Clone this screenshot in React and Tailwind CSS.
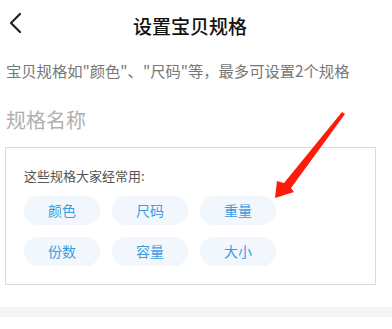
import React from 'react';

const chips = ['颜色', '尺码', '重量', '份数', '容量', '大小'];

const App = () => {
    return (
        <div className="relative w-[392px] h-[329px] bg-white overflow-hidden" style={{ fontFamily: '"Noto Sans CJK SC", "Noto Sans", sans-serif' }}>
            {/* Header */}
            <div className="relative h-[50px] flex items-center justify-center">
                <button className="absolute left-[8px] top-[12px] text-[#222]">
                    <svg width="16" height="24" viewBox="0 0 16 24" fill="none" stroke="currentColor" strokeWidth="2.2" strokeLinecap="round" strokeLinejoin="round">
                        <path d="M12 2 L3 11 L12 20" />
                    </svg>
                </button>
                <h1 className="text-[19px] font-medium text-[#111] mr-[12px] leading-none">设置宝贝规格</h1>
            </div>

            {/* content */}
            <p className="mt-[10px] ml-[6px] text-[15.3px] leading-[20px] text-[#777] whitespace-nowrap">宝贝规格如"颜色"、"尺码"等，最多可设置2个规格</p>
            <div className="mt-[26px] ml-[6px] text-[20px] leading-[28px] text-[#b0b0b0]">规格名称</div>

            {/* Suggestions */}
            <div className="mt-[13px] ml-[5px] w-[371px] border border-[#dcdcdc] pt-[19px] pb-[18px] pl-[18px]">
                <div className="text-[13px] leading-[18px] text-[#555]">这些规格大家经常用:</div>
                <div className="mt-[11px] grid grid-cols-[repeat(3,76px)] gap-x-[12px] gap-y-[12px]">
                    {chips.map((c) => (
                        <div key={c} className="h-[29px] rounded-full bg-[#f1f7fd] flex items-center justify-center text-[14px] text-[#3a9de0]">
                            {c}
                        </div>
                    ))}
                </div>
            </div>

            <div className="mt-[22px] h-[10px] bg-[#f4f4f4]"></div>

            {/* red arrow overlay */}
            <svg className="absolute left-0 top-0 pointer-events-none" width="392" height="329" viewBox="0 0 392 329">
                <polygon points="342,112 345,114 291,188 294,192 275,198 277,181 284,183" fill="#ff1a0a" />
            </svg>
        </div>
    );
};

export default App;
